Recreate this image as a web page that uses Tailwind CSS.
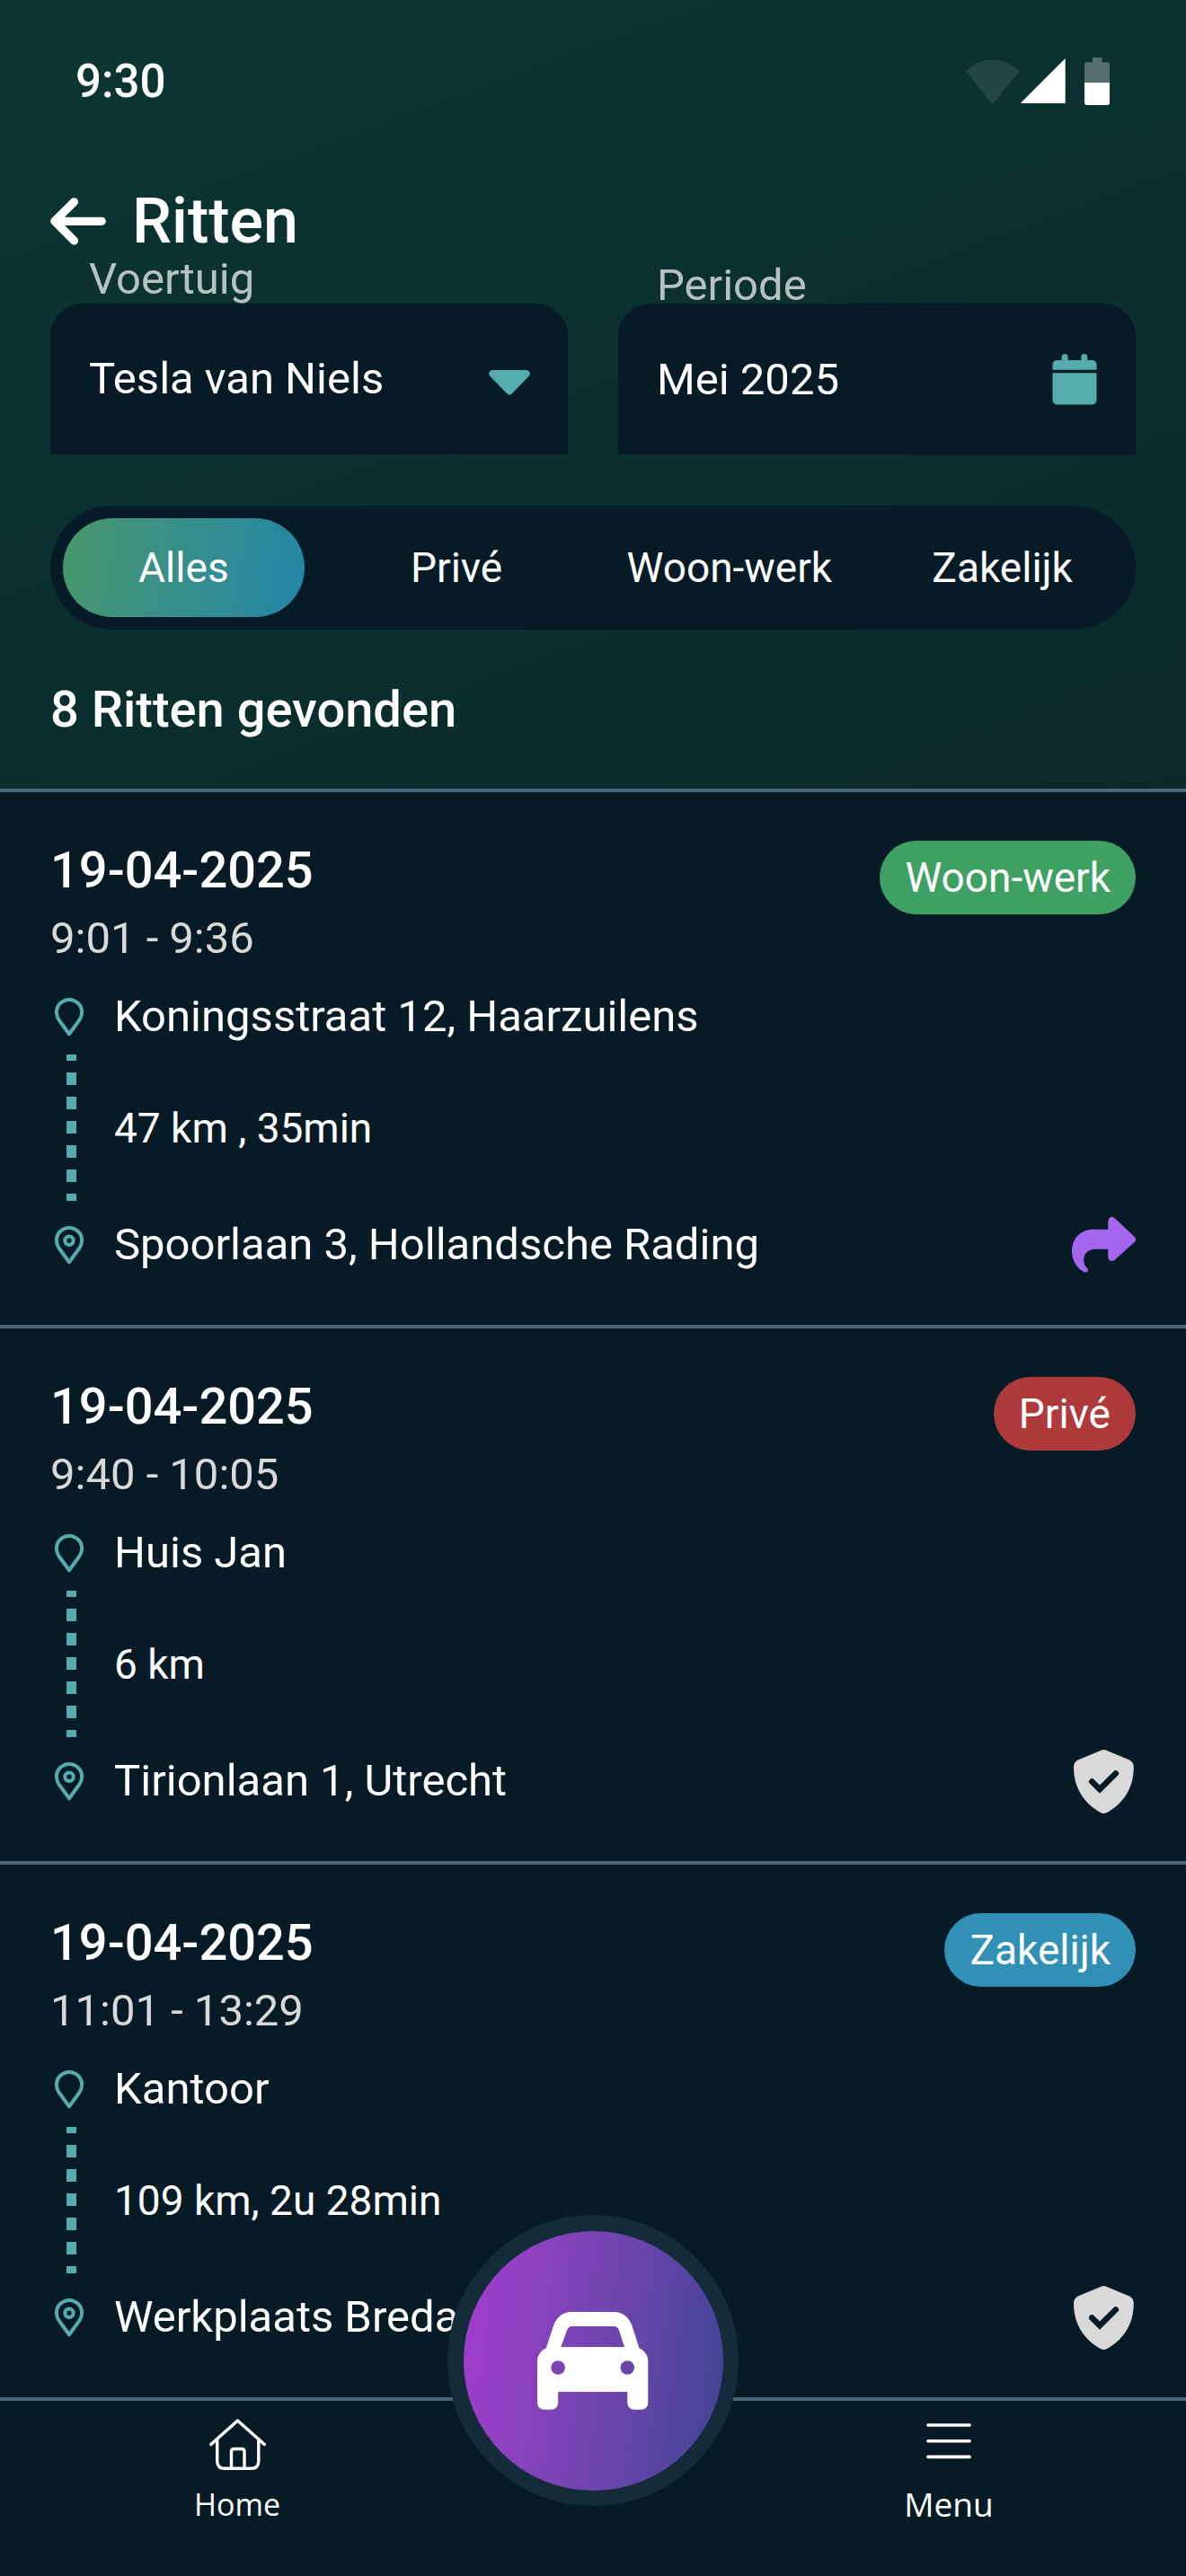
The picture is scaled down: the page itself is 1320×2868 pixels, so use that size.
<!DOCTYPE html>
<html lang="nl">
<head>
    <meta charset="UTF-8">
    <meta name="viewport" content="width=device-width, initial-scale=1.0">
    <title>Ritten</title>
    <script src="https://cdn.jsdelivr.net/npm/@tailwindcss/browser@4"></script>
</head>
<body class="bg-[#071b26] text-white font-[Roboto,sans-serif] text-[49px] leading-[58px] flex flex-col min-h-screen">

    <!-- Shared icons -->
    <svg class="hidden" aria-hidden="true">
        <symbol id="pin" viewBox="0 0 42 44">
            <path d="M21 41.3L9.5 25.5C7.6 22.7 6.9 20 6.9 17A14.1 14.1 0 0 1 35.1 17C35.1 20 34.4 22.7 32.5 25.5Z" fill="none" stroke="currentColor" stroke-width="4" stroke-linejoin="round"/>
        </symbol>
        <symbol id="pin-end" viewBox="0 0 42 44">
            <path d="M21 41.3L9.5 25.5C7.6 22.7 6.9 20 6.9 17A14.1 14.1 0 0 1 35.1 17C35.1 20 34.4 22.7 32.5 25.5Z" fill="none" stroke="currentColor" stroke-width="4" stroke-linejoin="round"/>
            <circle cx="21" cy="17.2" r="4.7" fill="none" stroke="currentColor" stroke-width="4"/>
        </symbol>
        <symbol id="route" viewBox="0 0 42 163">
            <path d="M23.5 0V163" fill="none" stroke="currentColor" stroke-width="11" stroke-dasharray="14 13" stroke-dashoffset="7"/>
        </symbol>
        <symbol id="shield" viewBox="0 0 67 71">
            <path d="M30.5 .7Q33.4 -.5 36.3 .7L61.5 11.3Q66.8 13.8 66.8 19.5C66.8 45 53 61 37 70Q33.4 71.8 29.8 70C13.8 61 0 45 0 19.5Q0 13.8 5.3 11.3Z" fill="currentColor"/>
            <path d="M20.3 35.5L29 44.2L46.8 26.5" fill="none" stroke="#071b26" stroke-width="6.6" stroke-linecap="round"/>
        </symbol>
    </svg>

    <header class="bg-linear-160 from-[#0c3634] to-[#0a292b]">
        <!-- Status bar -->
        <div class="flex items-center justify-between px-[84px] pt-[62px]">
            <span class="text-[51px] font-medium">9:30</span>
            <svg class="w-[161px] h-[54px]" viewBox="0 0 161 54" fill="#fff" aria-hidden="true">
                <path opacity=".1" d="M0 15.5C17 -2 42 -2 59.3 15.5L29.7 52Z"/>
                <path d="M60.7 51L110.7 1V51Z"/>
                <path opacity=".3" d="M141 0H151.5V5.3H157Q160 5.3 160 8.3V28H132V8.3Q132 5.3 135 5.3H141Z"/>
                <path d="M132 28H160V50Q160 53 157 53H135Q132 53 132 50Z"/>
            </svg>
        </div>

        <div class="px-14 pt-[88px] pb-[55px]">
            <div class="flex items-center gap-[29px]">
                <a href="#" aria-label="Terug">
                    <svg class="w-[62px] h-[53px]" viewBox="0 0 62 53" fill="none" stroke="#fff" stroke-width="9.2" stroke-linecap="round" stroke-linejoin="round">
                        <path d="M26.5 4.8L4.8 26.3L26.5 47.9M6 26.3H57.3"/>
                    </svg>
                </a>
                <h1 class="text-[70px] leading-[76px] font-medium">Ritten</h1>
            </div>

            <!-- Filters -->
            <form class="grid grid-cols-2 gap-14 items-end">
                <div>
                    <label for="voertuig" class="block pl-[43px] leading-[54px] text-white/70">Voertuig</label>
                    <div class="relative">
                        <select id="voertuig" class="block appearance-none w-full h-[168px] pl-[43px] pr-[100px] rounded-t-[36px] bg-[#071b26]">
                            <option>Tesla van Niels</option>
                        </select>
                        <svg class="absolute right-[42px] inset-y-0 my-auto w-[46px] h-[28px] translate-y-1 pointer-events-none" viewBox="0 0 46 28" fill="#54acac">
                            <path d="M4.5 0H41.5C45.5 0 47.2 4.2 44.5 7L26 26Q23 29 20 26L1.5 7C-1.2 4.2 .5 0 4.5 0Z"/>
                        </svg>
                    </div>
                </div>
                <div>
                    <label for="periode" class="block pl-[43px] leading-[40px] text-white/70">Periode</label>
                    <div class="relative">
                        <input id="periode" type="text" value="Mei 2025" class="block w-full h-[168px] pl-[43px] pr-[100px] rounded-t-[36px] bg-[#071b26]">
                        <svg class="absolute right-[43px] inset-y-0 my-auto w-[50px] h-[57px] pointer-events-none" viewBox="0 0 50 57" fill="#54acac">
                            <path d="M5.5 7H10.7V3.5A3.5 3.5 0 0 1 17.7 3.5V7H32.3V3.5A3.5 3.5 0 0 1 39.3 3.5V7H44.5A5 5 0 0 1 49.5 12V17.7H.5V12A5 5 0 0 1 5.5 7ZM.5 21.3H49.5V51.5A5 5 0 0 1 44.5 56.5H5.5A5 5 0 0 1 .5 51.5Z"/>
                        </svg>
                    </div>
                </div>
            </form>

            <div class="grid grid-cols-4 gap-[35px] mt-[57px] h-[138px] p-[14px] rounded-full bg-[#071b26] text-[46px]">
                <button type="button" aria-pressed="true" class="rounded-full bg-linear-100 from-[#48976a] to-[#2385a8]">Alles</button>
                <button type="button" aria-pressed="false" class="rounded-full">Privé</button>
                <button type="button" aria-pressed="false" class="rounded-full whitespace-nowrap">Woon-werk</button>
                <button type="button" aria-pressed="false" class="rounded-full">Zakelijk</button>
            </div>

            <h2 class="mt-14 text-[56px] leading-[66px] font-medium">8 Ritten gevonden</h2>
        </div>
    </header>

    <main class="flex-1">
        <ul>
            <li class="border-t-4 border-[#4a667a] px-14 pt-[54px] pb-[60px]">
                <div class="flex items-start justify-between">
                    <div>
                        <h3 class="text-[56px] leading-[66px] font-medium">19-04-2025</h3>
                        <p class="mt-[14px] text-[#d9d9d9]">9:01 - 9:36</p>
                    </div>
                    <span class="px-7 rounded-full bg-[#3fa063] text-[46px] leading-[82px]">Woon-werk</span>
                </div>
                <div class="flex items-center gap-[29px] mt-[29px]">
                    <svg class="w-[42px] h-[44px] text-[#54acac]"><use href="#pin"/></svg>
                    <p>Koningsstraat 12, Haarzuilens</p>
                </div>
                <div class="flex items-center gap-[29px] mt-[13px]">
                    <svg class="w-[42px] h-[163px] text-[#54acac]"><use href="#route"/></svg>
                    <p class="text-[46px]">47 km , 35min</p>
                </div>
                <div class="flex items-center gap-[29px] mt-5">
                    <svg class="w-[42px] h-[44px] text-[#54acac]"><use href="#pin-end"/></svg>
                    <p class="flex-1">Spoorlaan 3, Hollandsche Rading</p>
                    <a href="#" aria-label="Rit delen" class="-my-2">
                        <svg class="w-[71px] h-[62px]" viewBox="0 0 71 62" fill="#a565ee">
                            <path d="M24 13.7H40.3V5C40.3 .5 44.7 -1.5 48 1.5L69.5 21.8C71.5 23.6 71.5 26.2 69.5 28L48 47.6C44.7 50.5 40.3 48.8 40.3 44.5V35.7H26C18 35.7 13.3 41 13.3 47C13.3 52 14.5 54.3 17 56.8C19.5 59.4 17 62.6 13.8 61.2C5 57 0 48 0 37.5C0 24 10 13.7 24 13.7Z"/>
                        </svg>
                    </a>
                </div>
            </li>

            <li class="border-t-4 border-[#4a667a] px-14 pt-[54px] pb-[60px]">
                <div class="flex items-start justify-between">
                    <div>
                        <h3 class="text-[56px] leading-[66px] font-medium">19-04-2025</h3>
                        <p class="mt-[14px] text-[#d9d9d9]">9:40 - 10:05</p>
                    </div>
                    <span class="px-7 rounded-full bg-[#af3a3c] text-[46px] leading-[82px]">Privé</span>
                </div>
                <div class="flex items-center gap-[29px] mt-[29px]">
                    <svg class="w-[42px] h-[44px] text-[#54acac]"><use href="#pin"/></svg>
                    <p>Huis Jan</p>
                </div>
                <div class="flex items-center gap-[29px] mt-[13px]">
                    <svg class="w-[42px] h-[163px] text-[#54acac]"><use href="#route"/></svg>
                    <p class="text-[46px]">6 km</p>
                </div>
                <div class="flex items-center gap-[29px] mt-5">
                    <svg class="w-[42px] h-[44px] text-[#54acac]"><use href="#pin-end"/></svg>
                    <p class="flex-1">Tirionlaan 1, Utrecht</p>
                    <svg class="w-[67px] h-[71px] -my-2 mr-0.5 text-[#d9d9d9]"><use href="#shield"/></svg>
                </div>
            </li>

            <li class="border-t-4 border-[#4a667a] px-14 pt-[54px] pb-[60px]">
                <div class="flex items-start justify-between">
                    <div>
                        <h3 class="text-[56px] leading-[66px] font-medium">19-04-2025</h3>
                        <p class="mt-[14px] text-[#d9d9d9]">11:01 - 13:29</p>
                    </div>
                    <span class="px-7 rounded-full bg-[#3090b5] text-[46px] leading-[82px]">Zakelijk</span>
                </div>
                <div class="flex items-center gap-[29px] mt-[29px]">
                    <svg class="w-[42px] h-[44px] text-[#54acac]"><use href="#pin"/></svg>
                    <p>Kantoor</p>
                </div>
                <div class="flex items-center gap-[29px] mt-[13px]">
                    <svg class="w-[42px] h-[163px] text-[#54acac]"><use href="#route"/></svg>
                    <p class="text-[46px]">109 km, 2u 28min</p>
                </div>
                <div class="flex items-center gap-[29px] mt-5">
                    <svg class="w-[42px] h-[44px] text-[#54acac]"><use href="#pin-end"/></svg>
                    <p class="flex-1">Werkplaats Breda</p>
                    <svg class="w-[67px] h-[71px] -my-2 mr-0.5 text-[#d9d9d9]"><use href="#shield"/></svg>
                </div>
            </li>
        </ul>
    </main>

    <!-- Bottom navigation -->
    <nav class="sticky bottom-0 grid grid-cols-[2fr_1fr_2fr] border-t-4 border-[#4a667a] bg-[#071b26] pt-5 pb-14 font-['Open_Sans',sans-serif] leading-[48px]">
        <a href="#" class="flex flex-col items-center gap-[13px] text-[34px]">
            <svg class="w-[63px] h-[58px]" viewBox="0 0 63 58" fill="none" stroke="#fff" stroke-width="3.4" stroke-linecap="round" stroke-linejoin="round">
                <path d="M1.8 28.5L31.5 2L61.3 28.5M8.7 23.5V47Q8.7 55.3 17 55.3H46.5Q54.8 55.3 54.8 47V23.5M24.5 55V36.5Q24.5 33.5 27.5 33.5H36Q39 33.5 39 36.5V55"/>
            </svg>
            Home
        </a>
        <a href="#" class="col-start-3 flex flex-col items-center gap-[13px] text-[37px]">
            <svg class="w-[50px] h-[58px]" viewBox="0 0 50 58" fill="none" stroke="#fff" stroke-width="3.6" stroke-linecap="round">
                <path d="M2 7H48M2 24.7H48M2 42.4H48"/>
            </svg>
            Menu
        </a>
        <button type="button" aria-label="Rit starten" class="absolute -top-[207px] left-1/2 -translate-x-1/2 flex items-center justify-center size-[324px] rounded-full bg-[#142b39]">
            <span class="flex items-center justify-center size-[289px] rounded-full bg-linear-98 from-[#a63ccf] to-[#3c4493]">
                <svg class="w-[124px] h-[109px]" viewBox="0 0 124 109" fill="#fff" fill-rule="evenodd">
                    <path d="M38 0H85.5C94.5 0 101.5 5.3 105 14L113.5 40.3C119.5 43 123.3 48.5 123.3 55V101C123.3 105.5 120 108.7 115.5 108.7H108C103.5 108.7 100.3 105.5 100.3 101V89H23.2V101C23.2 105.5 20 108.7 15.5 108.7H7.8C3.3 108.7 0 105.5 0 101V55C0 48.5 3.8 43 9.8 40.3L18.5 14C22 5.3 29 0 38 0ZM26.3 39H97L91 20.5Q89.5 16 85 16H38.5Q34.5 16 33 20.5ZM15.3 62A7.8 7.8 0 1 0 30.9 62A7.8 7.8 0 1 0 15.3 62ZM92.5 62A7.8 7.8 0 1 0 108.1 62A7.8 7.8 0 1 0 92.5 62Z"/>
                </svg>
            </span>
        </button>
    </nav>

</body>
</html>
